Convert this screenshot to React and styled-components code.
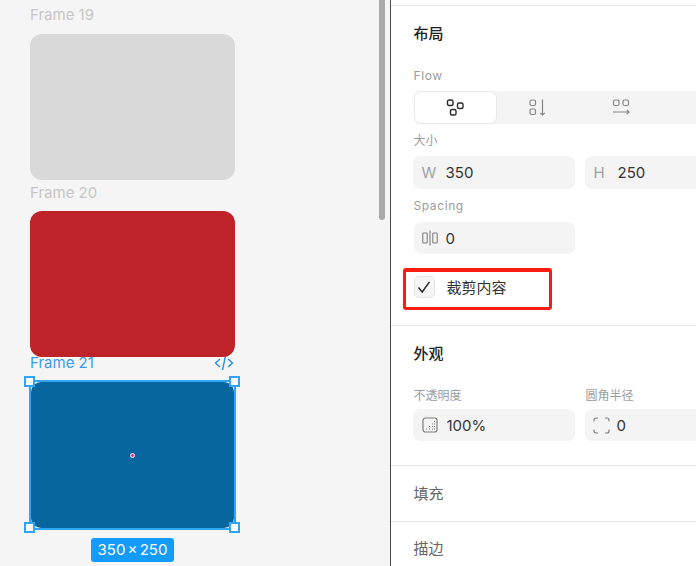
import React from 'react'
import styled, { createGlobalStyle } from 'styled-components'

const GlobalStyle = createGlobalStyle`
  html, body {
    margin: 0;
    padding: 0;
    height: 100%;
    overflow: hidden;
    background: #fff;
    font-family: Inter, "Noto Sans CJK SC", sans-serif;
  }
`

const Page = styled.div`
  display: flex;
  width: 696px;
  height: 566px;
  overflow: hidden;
`

const Canvas = styled.div`
  position: relative;
  box-sizing: border-box;
  width: 390px;
  height: 566px;
  flex: none;
  padding: 5px 0 0 30px;
  background: #f5f5f5;
  overflow: hidden;
`

const Scrollbar = styled.div`
  position: absolute;
  left: 379px;
  top: 0;
  width: 6px;
  height: 220px;
  border-radius: 0 0 3px 3px;
  background: #a9a9a9;
`

const FrameHead = styled.div`
  box-sizing: border-box;
  display: flex;
  justify-content: space-between;
  align-items: center;
  width: 205px;
  height: ${p => p.$height}px;
  padding-bottom: ${p => p.$lift}px;
  font-size: 15px;
  line-height: 18px;
  color: ${p => (p.$selected ? '#3e9be9' : '#c6c6c6')};
`

const FrameBox = styled.div`
  position: relative;
  width: 205px;
  height: 146px;
  border-radius: 12px;
  background: ${p => p.$color};
`

const CodeMark = styled.span`
  display: flex;
  margin-right: 1px;
`

const Selected = styled.div`
  position: relative;
  box-sizing: border-box;
  width: 207px;
  height: 150px;
  margin: 0 0 0 -1px;
  border: 2px solid #2ea4fb;
`

const SelectedFill = styled.div`
  height: 100%;
  border-radius: 10px;
  background: #07669e;
`

const Handle = styled.div`
  position: absolute;
  box-sizing: border-box;
  width: 11px;
  height: 11px;
  border: 2px solid #2ea4fb;
  background: #fff;
  ${p => (p.$y === 'top' ? 'top: -6px;' : 'bottom: -5px;')}
  ${p => (p.$x === 'left' ? 'left: -7px;' : 'right: -6px;')}
`

const CenterDot = styled.div`
  position: absolute;
  left: 98.5px;
  top: 70.5px;
  box-sizing: border-box;
  width: 5px;
  height: 5px;
  border: 1.5px solid #f4f4f4;
  border-radius: 50%;
  background: #ee2aa8;
`

const SizeWrap = styled.div`
  display: flex;
  justify-content: center;
  width: 205px;
  margin-top: 8px;
`

const SizeBadge = styled.div`
  width: 83px;
  height: 24px;
  border-radius: 3px;
  background: #139bfd;
  color: #fff;
  font-size: 15px;
  line-height: 24px;
  text-align: center;
  word-spacing: -2px;
`

const Panel = styled.div`
  box-sizing: border-box;
  width: 306px;
  height: 566px;
  flex: none;
  border-left: 1.5px solid #4a4a4a;
  padding-top: 5px;
  background: #fff;
  overflow: hidden;
`

const Section = styled.section`
  box-sizing: border-box;
  height: ${p => p.$height}px;
  padding: ${p => p.$top || 0}px 0 0 22.5px;
  border-top: 1px solid #e5e5e5;
`

const Heading = styled.h3`
  margin: 0;
  font-size: 15px;
  line-height: 20px;
  font-weight: ${p => (p.$muted ? 400 : 500)};
  color: ${p => (p.$muted ? '#666' : '#222')};
`

const Label = styled.div`
  height: 16px;
  font-size: 12px;
  line-height: 16px;
  letter-spacing: ${p => (p.$latin ? '0.6px' : '0')};
  color: #9c9c9c;
`

const FlowLabel = styled(Label)`
  margin-top: 24px;
`

const Segmented = styled.div`
  display: flex;
  width: 300px;
  height: 33px;
  margin: 7px 0 9px;
  border-radius: 6px;
  background: #f4f4f4;
`

const Segment = styled.div`
  box-sizing: border-box;
  display: flex;
  align-items: center;
  justify-content: center;
  width: 83px;
  flex: none;
  color: ${p => (p.$active ? '#2a2a2a' : '#858585')};
  ${p => p.$active && `
    background: #fff;
    border: 1px solid #e8e8e8;
    border-radius: 7px;
  `}
`

const FieldRow = styled.div`
  display: flex;
  gap: 10px;
  margin: ${p => p.$top || 0}px 0 ${p => p.$bottom || 0}px -1px;
`

const Field = styled.div`
  box-sizing: border-box;
  display: flex;
  align-items: center;
  width: 162px;
  height: ${p => p.$height || 33}px;
  flex: none;
  padding-left: ${p => p.$pad || 9}px;
  border-radius: 7px;
  background: #f4f4f4;
  font-size: 15px;
  color: #333;
`

const SpacingField = styled(Field)`
  width: 161px;
  margin-left: 1px;
`

const FieldKey = styled.span`
  width: 24px;
  flex: none;
  color: #a0a0a0;
`

const IconSlot = styled.span`
  display: flex;
  align-items: center;
  width: ${p => p.$width}px;
  flex: none;
  color: #7d7d7d;
`

const ClipRow = styled.div`
  position: relative;
  display: flex;
  align-items: center;
  gap: 12px;
  height: 22px;
  margin-top: 22px;
  font-size: 15px;
  color: #333;
`

const ClipText = styled.span`
  position: relative;
  top: -1px;
`

const Check = styled.div`
  box-sizing: border-box;
  display: flex;
  align-items: center;
  justify-content: center;
  width: 21px;
  height: 22px;
  border: 1px solid #e4e4e4;
  border-radius: 5px;
  background: #f6f6f6;
  color: #222;
`

const Highlight = styled.div`
  position: absolute;
  left: -11px;
  top: -8px;
  box-sizing: border-box;
  width: 149px;
  height: 42px;
  border: 3.5px solid #fb1c10;
  border-width: 4px 3.5px 3.5px;
  border-radius: 3px;
`

const LabelPair = styled(FieldRow)`
  padding-left: 1px;
`

const OpacityLabel = styled(Label)`
  width: 162px;
`

const CodeIcon = () => (
  <svg width="20" height="16" viewBox="0 0 20 16" fill="none" stroke="#2a8fe0" strokeWidth="1.4">
    <path d="M6 4 L1.5 8 L6 12M14 4 L18.5 8 L14 12M11.5 1 L8.5 15" />
  </svg>
)

const FlowIcon = () => (
  <svg width="18" height="18" viewBox="0 0 18 18" fill="none" stroke="currentColor" strokeWidth="1.4">
    <rect x="1.5" y="1" width="5.5" height="5.5" rx="1.5" />
    <rect x="11.5" y="4" width="5.5" height="5.5" rx="1.5" />
    <rect x="4.5" y="10.5" width="5.5" height="5.5" rx="1.5" />
  </svg>
)

const DownIcon = () => (
  <svg width="18" height="18" viewBox="0 0 18 18" fill="none" stroke="currentColor" strokeWidth="1.2">
    <rect x="1" y="1" width="5.5" height="5.5" rx="1.5" />
    <rect x="1" y="10" width="5.5" height="5.5" rx="1.5" />
    <path d="M13.5 0.5 V16M11.3 13.8 L13.5 16 L15.7 13.8" />
  </svg>
)

const RightIcon = () => (
  <svg width="18" height="18" viewBox="0 0 18 18" fill="none" stroke="currentColor" strokeWidth="1.2">
    <rect x="1.5" y="1" width="5.5" height="5.5" rx="1.5" />
    <rect x="11" y="1" width="5.5" height="5.5" rx="1.5" />
    <path d="M1 13 H17M14.8 10.8 L17 13 L14.8 15.2" />
  </svg>
)

const SpacingIcon = () => (
  <svg width="16" height="16" viewBox="0 0 16 16" fill="none" stroke="currentColor" strokeWidth="1.1">
    <rect x="0.8" y="3" width="4.4" height="10" rx="0.8" />
    <rect x="10.8" y="3" width="4.4" height="10" rx="0.8" />
    <path d="M8 0.5 V15.5" />
  </svg>
)

const OpacityIcon = () => (
  <svg width="16" height="16" viewBox="0 0 16 16" fill="none" stroke="currentColor">
    <rect x="1" y="1" width="14" height="14" rx="2.5" strokeWidth="1.2" />
    <path d="M4 12 H5M7 12 H8M7 9.5 H8M10 12 H11M10 9.5 H11M10 7 H11M12 12 H13M12 9.5 H13M12 7 H13M12 4.5 H13" strokeWidth="1" />
  </svg>
)

const RadiusIcon = () => (
  <svg width="17" height="17" viewBox="0 0 17 17" fill="none" stroke="currentColor" strokeWidth="1.2" strokeLinecap="round">
    <path d="M1 4 V3 A2 2 0 0 1 3 1 H4.5M12.5 1 H14 A2 2 0 0 1 16 3 V4M16 13 V14 A2 2 0 0 1 14 16 H12.5M4.5 16 H3 A2 2 0 0 1 1 14 V13" />
  </svg>
)

const CheckIcon = () => (
  <svg width="14" height="14" viewBox="0 0 14 14" fill="none" stroke="currentColor" strokeWidth="1.4">
    <path d="M1.5 7.5 L5.2 12 L12.5 1.8" />
  </svg>
)

const App = () => {
  return (
    <Page>
      <GlobalStyle />
      <Canvas>
        <FrameHead $height={29} $lift={9}>Frame 19</FrameHead>
        <FrameBox $color="#d9d9d9" />
        <FrameHead $height={31} $lift={5}>Frame 20</FrameHead>
        <FrameBox $color="#be232a" />
        <FrameHead $height={23} $lift={11} $selected>
          <span>Frame 21</span>
          <CodeMark><CodeIcon /></CodeMark>
        </FrameHead>
        <Selected>
          <SelectedFill />
          <Handle $y="top" $x="left" />
          <Handle $y="top" $x="right" />
          <Handle $y="bottom" $x="left" />
          <Handle $y="bottom" $x="right" />
          <CenterDot />
        </Selected>
        <SizeWrap>
          <SizeBadge>350 × 250</SizeBadge>
        </SizeWrap>
        <Scrollbar />
      </Canvas>
      <Panel>
        <Section $height={320} $top={18}>
          <Heading>布局</Heading>
          <FlowLabel $latin>Flow</FlowLabel>
          <Segmented>
            <Segment $active><FlowIcon /></Segment>
            <Segment><DownIcon /></Segment>
            <Segment><RightIcon /></Segment>
          </Segmented>
          <Label>大小</Label>
          <FieldRow $top={7} $bottom={9}>
            <Field>
              <FieldKey>W</FieldKey>350
            </Field>
            <Field>
              <FieldKey>H</FieldKey>250
            </Field>
          </FieldRow>
          <Label $latin>Spacing</Label>
          <FieldRow $top={8}>
            <SpacingField $height={32} $pad={8}>
              <IconSlot $width={24}><SpacingIcon /></IconSlot>0
            </SpacingField>
          </FieldRow>
          <ClipRow>
            <Check><CheckIcon /></Check>
            <ClipText>裁剪内容</ClipText>
            <Highlight />
          </ClipRow>
        </Section>
        <Section $height={140} $top={18}>
          <Heading>外观</Heading>
          <LabelPair $top={24}>
            <OpacityLabel>不透明度</OpacityLabel>
            <Label>圆角半径</Label>
          </LabelPair>
          <FieldRow $top={5}>
            <Field $height={32}>
              <IconSlot $width={25}><OpacityIcon /></IconSlot>100%
            </Field>
            <Field $height={32} $pad={8}>
              <IconSlot $width={24}><RadiusIcon /></IconSlot>0
            </Field>
          </FieldRow>
        </Section>
        <Section $height={56} $top={18}>
          <Heading $muted>填充</Heading>
        </Section>
        <Section $height={45} $top={17}>
          <Heading $muted>描边</Heading>
        </Section>
      </Panel>
    </Page>
  )
}

export default App
